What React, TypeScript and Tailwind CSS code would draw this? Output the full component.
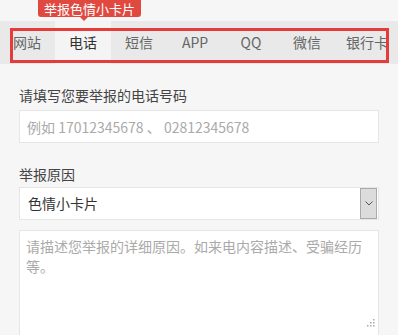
import { useState } from 'react';

const tabs = ['网站', '电话', '短信', 'APP', 'QQ', '微信'];

export default function App() {
  const [active, setActive] = useState('电话');

  return (
    <div
      className="relative w-[398px] h-[335px] overflow-hidden bg-[#f6f6f6] text-[#333]"
      style={{ fontFamily: '"Microsoft YaHei", "Noto Sans CJK SC", sans-serif' }}
    >
      {/* tabs */}
      <div className="mt-[21px] h-[43px] bg-[#e9e9e9] flex overflow-hidden">
        <div className="flex -ml-px">
          {tabs.map(t => (
            <button
              key={t}
              onClick={() => setActive(t)}
              className={
                'w-[56px] shrink-0 h-full flex items-center justify-center text-[14px] ' +
                (active === t ? 'bg-[#f4f4f4] text-[#333]' : 'text-[#666]')
              }
            >
              {t}
            </button>
          ))}
          <button className="shrink-0 h-full pl-[11px] pr-[10px] flex items-center text-[14px] text-[#666] whitespace-nowrap">
            银行卡
          </button>
        </div>
      </div>

      {/* annotation box */}
      <div className="absolute left-[10px] top-[28px] w-[379px] h-[35px] border-[3px] border-[#e63b3b]" />

      {/* tooltip */}
      <div className="absolute left-[38px] top-0 h-[17px] px-[6px] rounded-b-[3px] bg-[#e0493f] text-white text-[13px] leading-[17px] whitespace-nowrap">
        举报色情小卡片
        <span className="absolute left-[42px] top-[17px] w-0 h-0 border-x-[4px] border-x-transparent border-t-[4px] border-t-[#e0493f]" />
      </div>

      {/* form */}
      <div className="px-[19px] pt-[21px] w-[379px] box-content">
        <div className="text-[14px] leading-[20px] text-[#444]">请填写您要举报的电话号码</div>
        <input
          className="mt-[5px] block w-[360px] h-[33px] bg-white border border-[#e6e6e6] px-[7px] text-[14px] outline-none placeholder:text-[#aaa]"
          placeholder="例如 17012345678 、 02812345678"
        />

        <div className="mt-[21px] text-[14px] leading-[20px] text-[#444]">举报原因</div>
        <div className="mt-[3px] w-[360px] h-[33px] bg-white border border-[#e6e6e6] flex items-center">
          <span className="flex-1 pl-[8px] text-[14px] text-[#333]">色情小卡片</span>
          <span className="w-[17px] h-[31px] mr-px bg-[#dcdcdc] border border-[#aaa] flex items-center justify-center">
            <svg width="8" height="5" viewBox="0 0 8 5" fill="none">
              <path d="M0.5 0.5 L4 4 L7.5 0.5" stroke="#555" strokeWidth="1" />
            </svg>
          </span>
        </div>

        <div className="relative mt-[10px] w-[360px] h-[120px] bg-white border border-[#e6e6e6] pl-[6px] pr-[8px] pt-[5px]">
          <p className="text-[14px] leading-[20px] text-[#aaa]">
            请描述您举报的详细原因。如来电内容描述、受骗经历
            <br />
            等。
          </p>
          <svg className="absolute right-[3px] top-[88px]" width="8" height="8" viewBox="0 0 8 8">
            <rect x="6" y="0" width="1.5" height="1.5" fill="#aaa" />
            <rect x="3" y="3" width="1.5" height="1.5" fill="#aaa" />
            <rect x="6" y="3" width="1.5" height="1.5" fill="#aaa" />
            <rect x="0" y="6" width="1.5" height="1.5" fill="#aaa" />
            <rect x="3" y="6" width="1.5" height="1.5" fill="#aaa" />
            <rect x="6" y="6" width="1.5" height="1.5" fill="#aaa" />
          </svg>
        </div>
      </div>
    </div>
  );
}
